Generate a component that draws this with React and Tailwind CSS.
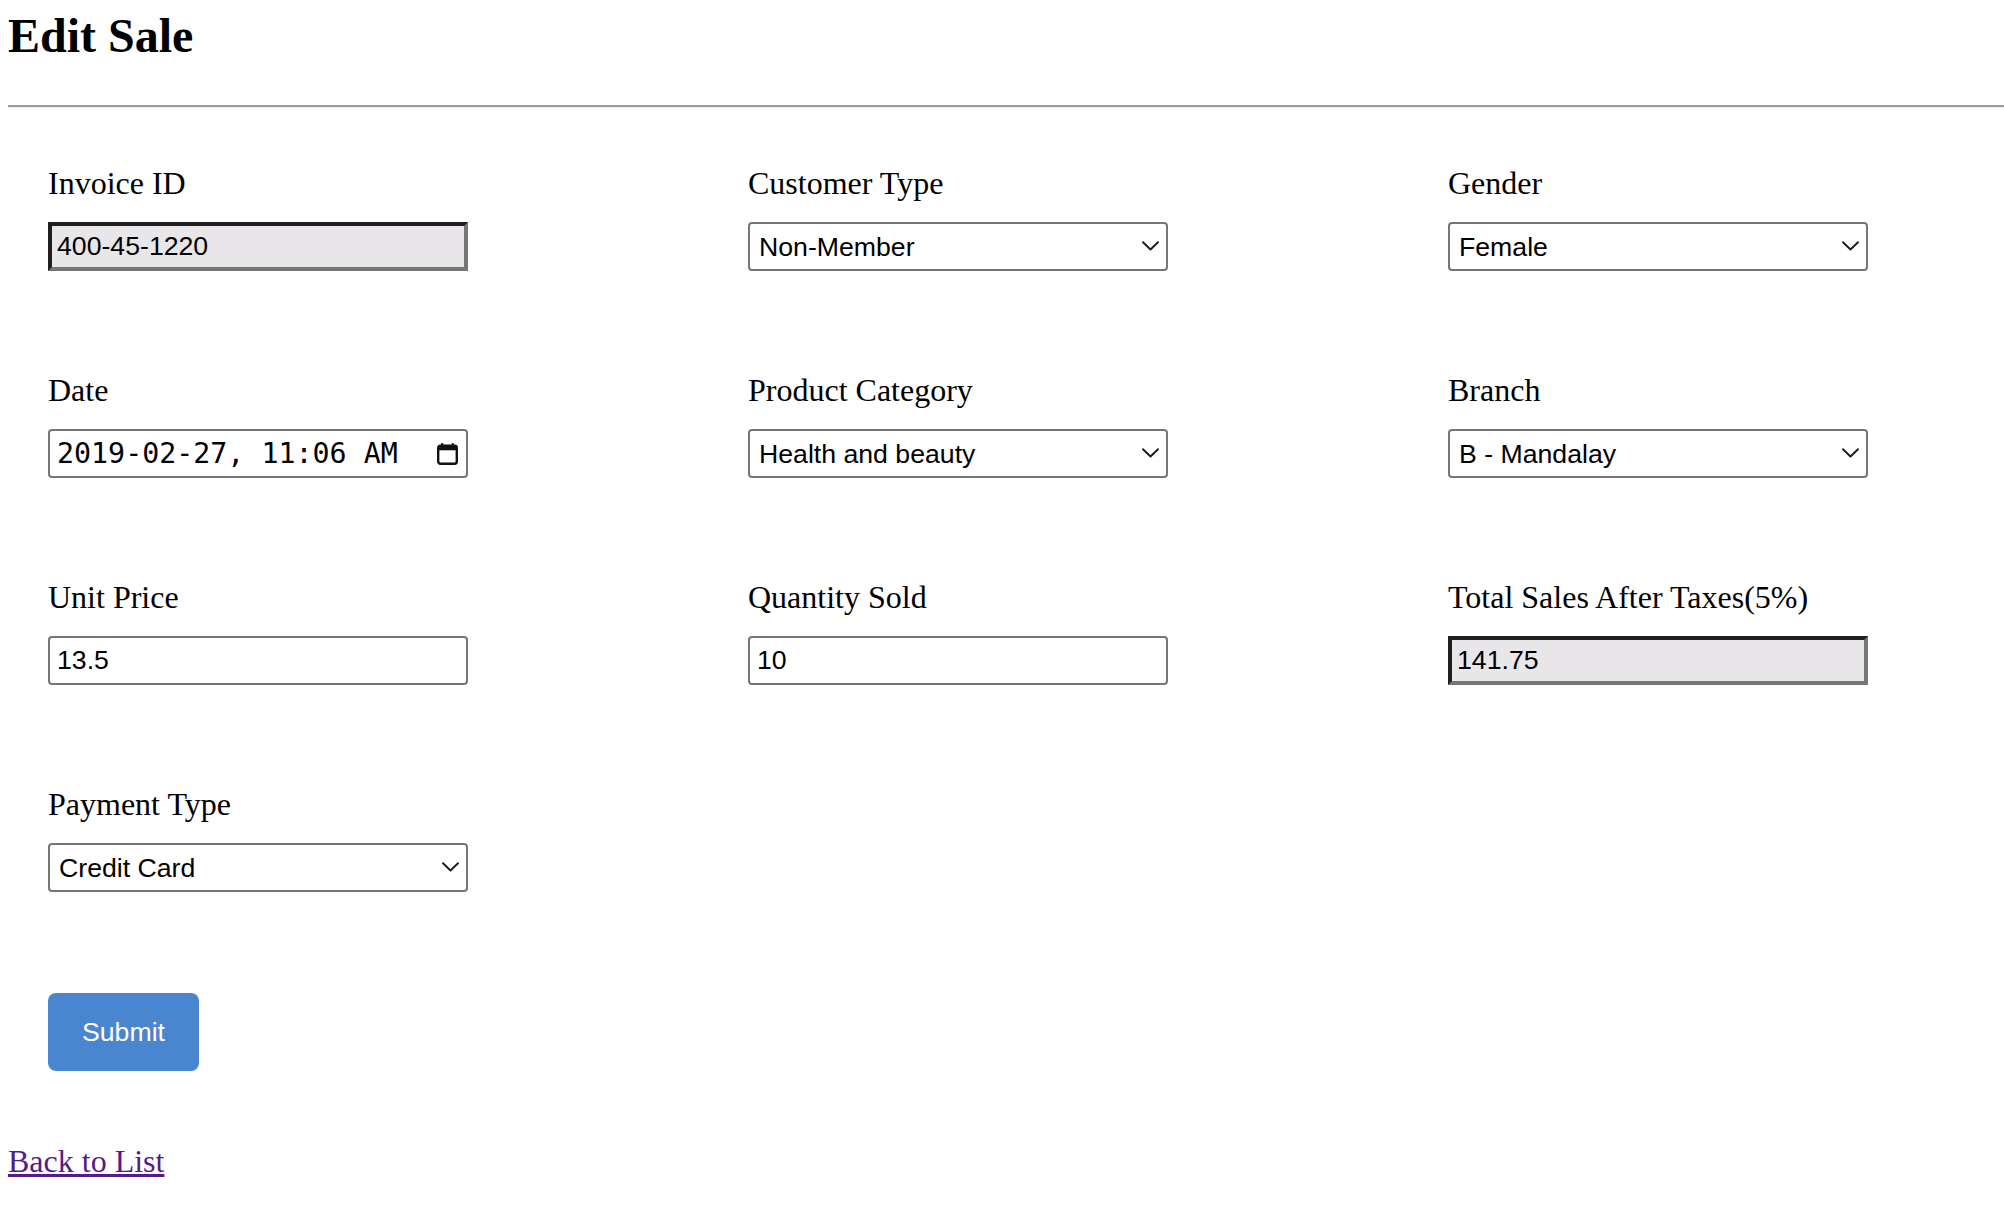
import React from 'react'

const labelCls = "block font-['Liberation_Serif',serif] text-[32px] leading-[37px] text-black"
const readonlyCls = "block w-[420px] h-[49px] mt-[20px] border-[4px] border-t-[#1f1f1f] border-l-[#1f1f1f] border-b-[#767676] border-r-[#767676] bg-[#e8e6e8] pl-[5px] font-['Liberation_Sans',sans-serif] text-[26.67px] text-black outline-none"
const textCls = "block w-[420px] h-[49px] mt-[20px] border-2 border-[#767676] rounded-[4px] bg-white pl-[7px] font-['Liberation_Sans',sans-serif] text-[26.67px] text-black outline-none"

function Chevron() {
  return (
    <svg className="absolute right-[9px] top-[19px] pointer-events-none" width="17" height="10" viewBox="0 0 17 10" fill="none">
      <path d="M1 1.2l7.5 7.3L16 1.2" stroke="#1c1c1c" strokeWidth="1.9" strokeLinecap="round" strokeLinejoin="round" />
    </svg>
  )
}

function CalendarIcon() {
  return (
    <svg width="21" height="22" viewBox="0 0 21 22" fill="none">
      <rect x="4" y="0" width="2.4" height="4" rx="1" fill="#111" />
      <rect x="14.6" y="0" width="2.4" height="4" rx="1" fill="#111" />
      <rect x="1.2" y="2.8" width="18.6" height="18" rx="2.2" stroke="#111" strokeWidth="2.4" />
      <rect x="1.2" y="2.8" width="18.6" height="4.5" fill="#111" />
    </svg>
  )
}

function SelectField({ label, value, options }) {
  return (
    <div>
      <label className={labelCls}>{label}</label>
      <div className="relative mt-[20px] w-[420px] h-[49px]">
        <select
          defaultValue={value}
          className="appearance-none block w-full h-full border-2 border-[#767676] rounded-[4px] bg-white pl-[9px] font-['Liberation_Sans',sans-serif] text-[26.67px] text-black outline-none"
        >
          {options.map((o) => (
            <option key={o} value={o}>{o}</option>
          ))}
        </select>
        <Chevron />
      </div>
    </div>
  )
}

function TextField({ label, value, readOnly }) {
  return (
    <div>
      <label className={labelCls}>{label}</label>
      <input type="text" defaultValue={value} readOnly={readOnly} className={readOnly ? readonlyCls : textCls} />
    </div>
  )
}

export default function App() {
  return (
    <div className="min-h-screen bg-white text-black">
      <div className="pl-2 pt-2">
        <h1 className="font-['Liberation_Serif',serif] text-[48px] font-bold leading-[55px]">Edit Sale</h1>
        <div className="mt-[42px] border-t-2 border-t-[#9b9b9b] border-b border-b-[#ececec]" />

        <form className="pl-10 pt-[57px]" onSubmit={(e) => e.preventDefault()}>
          <div className="grid grid-cols-[420px_420px_420px] gap-x-[280px] gap-y-[101px]">
            <TextField label="Invoice ID" value="400-45-1220" readOnly />
            <SelectField label="Customer Type" value="Non-Member" options={['Member', 'Non-Member']} />
            <SelectField label="Gender" value="Female" options={['Male', 'Female']} />

            <div>
              <label className={labelCls}>Date</label>
              <div className="mt-[20px] w-[420px] h-[49px] flex items-center justify-between border-2 border-[#767676] rounded-[4px] bg-white pl-[7px] pr-[8px]">
                <span className="mt-[2px] font-['DejaVu_Sans_Mono',monospace] text-[28.3px] leading-none text-black whitespace-pre">2019-02-27, 11:06 AM</span>
                <CalendarIcon />
              </div>
            </div>
            <SelectField
              label="Product Category"
              value="Health and beauty"
              options={['Electronic accessories', 'Fashion accessories', 'Food and beverages', 'Health and beauty', 'Home and lifestyle', 'Sports and travel']}
            />
            <SelectField label="Branch" value="B - Mandalay" options={['A - Yangon', 'B - Mandalay', 'C - Naypyitaw']} />

            <TextField label="Unit Price" value="13.5" />
            <TextField label="Quantity Sold" value="10" />
            <TextField label="Total Sales After Taxes(5%)" value="141.75" readOnly />

            <SelectField label="Payment Type" value="Credit Card" options={['Cash', 'Credit Card', 'Ewallet']} />
            <div />
            <div />

            <div>
              <button
                type="submit"
                className="w-[151px] h-[78px] rounded-lg bg-[#4a86cf] text-white font-['Liberation_Sans',sans-serif] text-[26.67px]"
              >
                Submit
              </button>
            </div>
          </div>
        </form>

        <a href="#" className="block w-fit mt-[72px] font-['Liberation_Serif',serif] text-[32px] leading-[37px] text-[#551a8b] underline">
          Back to List
        </a>
      </div>
    </div>
  )
}
